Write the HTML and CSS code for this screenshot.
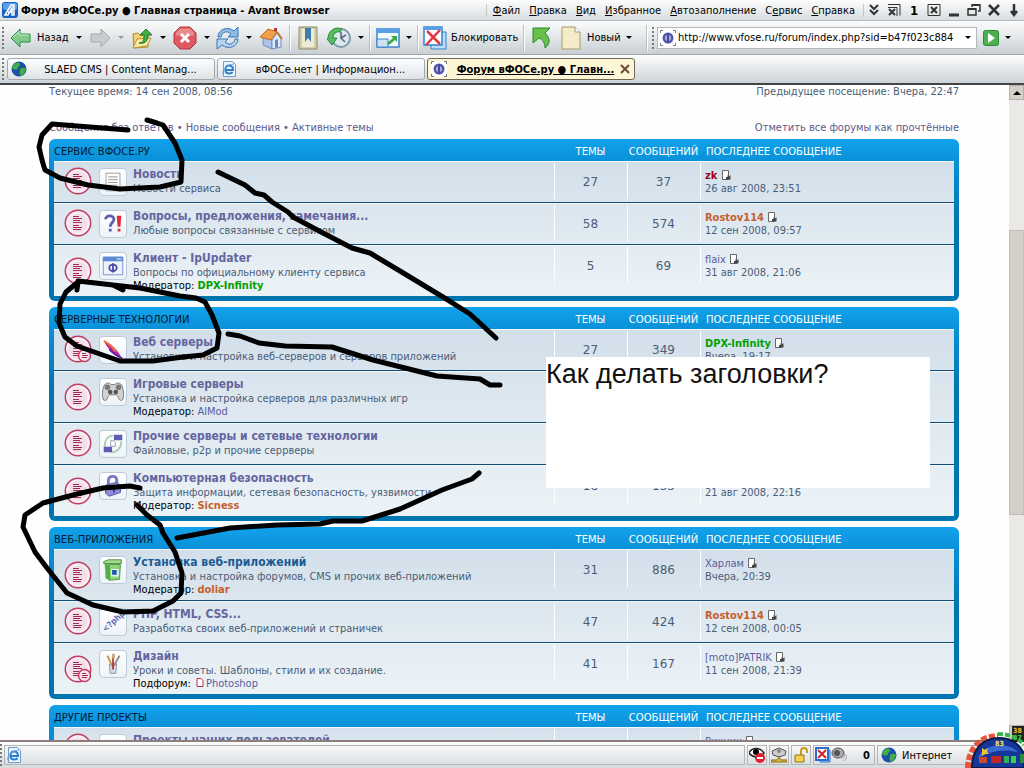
FILE: index.html
```html
<!DOCTYPE html>
<html lang="ru">
<head>
    <meta charset="UTF-8">
    <meta name="viewport" content="width=device-width, initial-scale=1.0">
    <title>Форум вФОСе.ру ● Главная страница</title>
    <link rel="stylesheet" href="styles.css">
</head>
<body>
    <!-- shared icons -->
    <svg class="defs" width="0" height="0">
        <symbol id="read" viewBox="0 0 28 28">
            <circle cx="14" cy="14" r="12.7" fill="#f1dfe9" stroke="#c43c61" stroke-width="1.5"/>
            <circle cx="14" cy="14" r="10.5" fill="none" stroke="#f8edf3" stroke-width="2"/>
            <path d="M9 7.500h6M9 9.500h9M9 11.500h7M9 16.500h6M9 18.500h9M9 20.500h8M9 13.500h9" stroke="#a52b55"/>
        </symbol>
        <symbol id="readsub" viewBox="0 0 28 28">
            <use href="#read"/>
            <circle cx="20.500" cy="20.500" r="6" fill="#f3e4ec" stroke="#c43c61" stroke-width="1.500"/>
            <path d="M18 18.500h4M18 20.500h6M18 22.500h5" stroke="#a52b55"/>
        </symbol>
        <symbol id="latest" viewBox="0 0 10 10">
            <path d="M1.500.500h6v9h-6z" fill="#fff" stroke="#666"/>
            <path d="M5 9.500h4.500V5L8 6.500 6.500 5v2H5z" fill="#444"/>
        </symbol>
        <symbol id="phi" viewBox="0 0 16 16">
            <path d="M0 0h16v16H0z" fill="#fff"/>
            <path d="M.500 3V.500H3M13 .500h2.500V3M15.500 13v2.500H13M3 15.500H.500V13" fill="none" stroke="#777"/>
            <circle cx="8" cy="8" r="5.500" fill="#5558a8"/>
            <ellipse cx="8" cy="8" rx="3" ry="3" fill="#aeb0dc"/>
            <path d="M8 3v10" stroke="#45489c" stroke-width="2"/>
        </symbol>
        <symbol id="globe" viewBox="0 0 16 16">
            <circle cx="8" cy="8" r="7.500" fill="#1c4fa8"/>
            <path d="M3 3c3-2 5-2 6 0s-2 2-2 4-4 2-6 0c0-1 1-3 2-4zM9 8c3-2 5-1 6 0-1 4-3 6-5 7-2-2-1-5-1-7z" fill="#3fae45"/>
        </symbol>
        <symbol id="ie" viewBox="0 0 16 16">
            <path d="M2.500.500h9l3 3v12h-12z" fill="#eef5fc" stroke="#6f9cc9"/>
            <path d="M11.500 11c-1 2-6 2.500-7-1-1-4 2-6 4.500-5.500 2 .400 3 2 3 4.500H5" fill="none" stroke="#2a80cc" stroke-width="2"/>
            <path d="M2 13C0 10 7 3 13 3" fill="none" stroke="#60a8e2"/>
        </symbol>
    </svg>

    <header class="titlebar">
        <svg class="app-icon" viewBox="0 0 16 16"><rect width="16" height="16" rx="3" fill="#1762c4"/><rect x="1" y="1" width="14" height="7" rx="2" fill="#5ba0ec"/><path d="M3 13L9 3h3v10h-2V6l-4 7zM6 10h5" fill="none" stroke="#fff" stroke-width="1.500"/></svg>
        <h1>Форум вФОСе.ру ● Главная страница - Avant Browser</h1>
        <nav class="menu">
            <a href="#"><u>Ф</u>айл</a>
            <a href="#"><u>П</u>равка</a>
            <a href="#"><u>В</u>ид</a>
            <a href="#"><u>И</u>збранное</a>
            <a href="#"><u>А</u>втозаполнение</a>
            <a href="#">С<u>е</u>рвис</a>
            <a href="#"><u>С</u>правка</a>
        </nav>
        <div class="winbuttons">
            <button aria-label="Свернуть панель"><svg viewBox="0 0 14 14"><path d="M3 2l4 4 4-4M3 7l4 4 4-4"/></svg></button>
            <button aria-label="Закрыть все"><svg viewBox="0 0 14 14"><path d="M1 1.500h12v11M1 4.500h9V13" stroke-width="1"/><path d="M2 6l6 6M8 6l-6 6"/></svg></button>
            <button class="num">1</button>
            <button aria-label="Закрыть вкладку"><svg viewBox="0 0 14 14"><path d="M1 1.500h12v11H1z" stroke-width="1"/><path d="M4 4l6 6M10 4l-6 6"/></svg></button>
            <button aria-label="Свернуть"><svg viewBox="0 0 14 14"><path d="M2 12h10" stroke-width="3"/></svg></button>
            <button aria-label="Восстановить"><svg viewBox="0 0 14 14"><path d="M5 4V2h8v6h-2" stroke-width="1.500"/><path d="M1 6h8v6H1z" stroke-width="1.500"/><path d="M1 6h8M5 2h8"/></svg></button>
            <button aria-label="Закрыть"><svg viewBox="0 0 14 14"><path d="M2 2l10 10M12 2L2 12" stroke-width="2.500"/></svg></button>
            <button aria-label="В трей"><svg viewBox="0 0 14 14"><path d="M7 1v10M4 8l3 4 3-4" stroke-width="2.500"/></svg></button>
        </div>
    </header>

    <div class="toolbar">
        <span class="grip"></span>
        <button class="tool tool-back"><svg viewBox="0 0 24 24"><path d="M2 12l9-9v5h10v8H11v5z" fill="#7fc98a" stroke="#2d8a43"/><path d="M4 11.500l6-6V9h10" fill="none" stroke="#c6ecc9"/></svg>Назад</button>
        <button class="caret" aria-label="История назад"></button>
        <button class="tool" aria-label="Вперёд"><svg viewBox="0 0 24 24"><path d="M22 12l-9-9v5H3v8h10v5z" fill="#c9cccf" stroke="#a5a9ad"/></svg></button>
        <button class="caret off" aria-label="История вперёд"></button>
        <button class="tool" aria-label="Вверх"><svg viewBox="0 0 24 24"><path d="M3 8l5-1 2 2h8v12l-14 1z" fill="#f0d070" stroke="#b08a30"/><path d="M3 22l4-9 14-1-4 8z" fill="#fbe9a0" stroke="#b89540"/><path d="M9 17c5 0 5-4 5-8h-4l6-6 6 6h-4c0 7-4 9-9 8z" fill="#43ad48" stroke="#1f7a2b"/></svg></button>
        <button class="caret" aria-label="Выбор папки"></button>
        <button class="tool tool-lg" aria-label="Стоп"><svg viewBox="0 0 24 24"><path d="M7 1h10l6 6v10l-6 6H7l-6-6V7z" fill="#df5a60" stroke="#b4333c"/><path d="M7 2.500h10l4 4v3H3v-3z" fill="#eb8a8c"/><path d="M8 8l8 8M16 8l-8 8" stroke="#fff" stroke-width="3"/></svg></button>
        <button class="caret" aria-label="Остановить все"></button>
        <button class="tool" aria-label="Обновить"><svg viewBox="0 0 24 24"><path d="M2 11C2 3 12 0 18 5l4-4v10H12l3-3C11 4 6 6 5 11z" fill="#8fbbe8" stroke="#3b74b5"/><path d="M22 13c0 8-10 11-16 6l-5 4V13h11l-3 3c4 4 9 2 10-3z" fill="#b3d2f0" stroke="#3b74b5"/></svg></button>
        <button class="caret" aria-label="Обновить все"></button>
        <button class="tool tool-lg" aria-label="Домой"><svg viewBox="0 0 24 24"><path d="M4 11l9 3v9l-9-4z" fill="#a9c4e8" stroke="#7390bb"/><path d="M13 14l5-7 4 6v8l-9 2z" fill="#dfeafa" stroke="#7390bb"/><path d="M15 2h3v4h-3z" fill="#b33"/><path d="M1 11l8-8 9 3-6 8z" fill="#f4a04a" stroke="#c06a20"/><path d="M18 6l5 7" stroke="#c97833" stroke-width="2"/><path d="M16 14l3-1v8l-3 1z" fill="#6c88b8"/></svg></button>
        <span class="sep"></span>
        <button class="tool" aria-label="Избранное"><svg viewBox="0 0 24 24"><path d="M3 1h18v22H3z" fill="#d3cfae" stroke="#8b8768"/><path d="M6 3h12v18H6z" fill="#eeecd9"/><path d="M9 2h6v14l-3-4-3 4z" fill="#3c7fa8"/></svg></button>
        <button class="tool tool-lg" aria-label="История"><svg viewBox="0 0 24 24"><circle cx="14" cy="12" r="9" fill="#dbe8f0" stroke="#8199a8" stroke-width="2"/><path d="M14 6v6l5-3M14 12l4 4" fill="none" stroke="#567" stroke-width="1.500"/><path d="M1 13C1 4 9 0 15 3l-2 3C9 5 6 8 6 12h4l-5 7-5-6z" fill="#5cbb62" stroke="#2c8a3c"/></svg></button>
        <button class="caret" aria-label="Журнал"></button>
        <span class="sep"></span>
        <button class="tool" aria-label="Окно"><svg viewBox="0 0 24 24"><path d="M1 3h22v18H1z" fill="#f4f9fe" stroke="#3b82cf" stroke-width="1.500"/><path d="M1 3h22v4H1z" fill="#5aa0e8"/><path d="M1 13h11v8H1z" fill="#cfe2f6" stroke="#3b82cf"/><path d="M11 17l6-5-2-2h6v6l-2-2-6 5z" fill="#3ba94a"/></svg></button>
        <button class="caret" aria-label="Размер окна"></button>
        <span class="sep"></span>
        <button class="tool tool-block"><svg viewBox="0 0 24 24"><path d="M8 6h15v17H8z" fill="#bcdcf8" stroke="#3183d2"/><path d="M1 1h18v18H1z" fill="#fff" stroke="#3183d2" stroke-width="1.500"/><path d="M1 1h18v3H1z" fill="#5aa0e8"/><path d="M4 5l13 13M17 4L3 19" stroke="#df3641" stroke-width="2.500"/></svg>Блокировать</button>
        <span class="sep"></span>
        <button class="tool" aria-label="Отправить"><svg viewBox="0 0 24 24"><path d="M3 2h17l-5 5c5 5 6 10 0 15 0-5-2-8-6-10l-6 5z" fill="#66c04b" stroke="#2d8a2d"/></svg></button>
        <button class="tool tool-new"><svg viewBox="0 0 24 24"><path d="M3 1h13l5 5v17H3z" fill="#f4ecc9" stroke="#a49a70"/><path d="M16 1v5h5" fill="#fff" stroke="#a49a70"/></svg>Новый</button>
        <button class="caret" aria-label="Новая вкладка"></button>
        <span class="sep address-sep"></span>
        <span class="grip"></span>
        <div class="address">
            <svg viewBox="0 0 16 16"><use href="#phi"/></svg>
            <input type="text" aria-label="Адрес" value="http://www.vfose.ru/forum/index.php?sid=b47f023c884">
            <button class="caret" aria-label="Список адресов"></button>
        </div>
        <button class="go" aria-label="Переход"><svg viewBox="0 0 16 16"><rect x=".500" y=".500" width="15" height="15" rx="2" fill="#4caf50" stroke="#2e8637"/><path d="M5 3l7 5-7 5z" fill="#fff"/></svg></button>
        <button class="caret" aria-label="Параметры перехода"></button>
    </div>

    <div class="tabs">
        <span class="grip"></span>
        <button class="tab"><svg viewBox="0 0 16 16"><use href="#globe"/></svg><span>SLAED CMS | Content Manag...</span></button>
        <button class="tab"><svg viewBox="0 0 16 16"><use href="#ie"/></svg><span>вФОСе.нет | Информацион...</span></button>
        <button class="tab active"><svg viewBox="0 0 16 16"><use href="#phi"/></svg><span>Форум вФОСе.ру ● Главн...</span><svg class="x" viewBox="0 0 10 10"><path d="M1 1l8 8M9 1L1 9" stroke="#6d4a3a" stroke-width="2"/></svg></button>
    </div>

    <div class="viewport">
        <main class="page">
            <div class="bar times">
                <span>Текущее время: 14 сен 2008, 08:56</span>
                <span>Предыдущее посещение: Вчера, 22:47</span>
            </div>
            <div class="bar links">
                <span><a href="#">Сообщения без ответов</a> • <a href="#">Новые сообщения</a> • <a href="#">Активные темы</a></span>
                <a href="#">Отметить все форумы как прочтённые</a>
            </div>

            <section class="forabg">
                <table>
                    <thead>
                        <tr><th class="category"><a href="#">Сервис вФОСе.ру</a></th><th class="num">Темы</th><th class="num">Сообщений</th><th class="last">Последнее сообщение</th></tr>
                    </thead>
                    <tbody>
                        <tr>
                            <td><div class="forum">
                                <svg class="status"><use href="#read"/></svg>
                                <svg class="icon" viewBox="0 0 28 28"><path d="M6.500 4.500h15v19h-15z" fill="#fff" stroke="#999"/><path d="M9 8.500h10M9 11.500h10M9 14.500h10M9 17.500h10M9 20.500h10" stroke="#888"/></svg>
                                <div><a class="title" href="#">Новости</a><p>Новости сервиса</p></div>
                            </div></td>
                            <td class="num">27</td><td class="num">37</td>
                            <td class="last"><a class="red" href="#">zk</a> <svg><use href="#latest"/></svg><br>26 авг 2008, 23:51</td>
                        </tr>
                        <tr>
                            <td><div class="forum">
                                <svg class="status"><use href="#read"/></svg>
                                <svg class="icon" viewBox="0 0 28 28"><path d="M6 9c0-5 9-5 9 0 0 3-4 4-4 8" fill="none" stroke="#5b5ea8" stroke-width="3"/><path d="M9.500 19h3v3h-3z" fill="#5b5ea8"/><path d="M18 5h5l-1 12h-3zM19 19h3v3h-3z" fill="#e02c3a"/></svg>
                                <div><a class="title" href="#">Вопросы, предложения, замечания...</a><p>Любые вопросы связанные с сервисом</p></div>
                            </div></td>
                            <td class="num">58</td><td class="num">574</td>
                            <td class="last"><a class="orange" href="#">Rostov114</a> <svg><use href="#latest"/></svg><br>12 сен 2008, 09:57</td>
                        </tr>
                        <tr>
                            <td><div class="forum">
                                <svg class="status"><use href="#read"/></svg>
                                <svg class="icon" viewBox="0 0 28 28"><path d="M3.500 4.500h21v19h-21z" fill="#eef3fb" stroke="#6d93cf"/><path d="M3 4h22v5H3z" fill="#5d8bd4"/><path d="M18 6.500h5" stroke="#fff"/><ellipse cx="14" cy="16" rx="4" ry="3.500" fill="none" stroke="#4a4da5" stroke-width="2"/><path d="M14 11v10" stroke="#4a4da5" stroke-width="2"/></svg>
                                <div><a class="title" href="#">Клиент - IpUpdater</a><p>Вопросы по официальному клиенту сервиса</p><p class="mod">Модератор: <a class="green" href="#">DPX-Infinity</a></p></div>
                            </div></td>
                            <td class="num">5</td><td class="num">69</td>
                            <td class="last"><a href="#">flaix</a> <svg><use href="#latest"/></svg><br>31 авг 2008, 21:06</td>
                        </tr>
                    </tbody>
                </table>
            </section>

            <section class="forabg">
                <table>
                    <thead>
                        <tr><th class="category"><a href="#">Серверные технологии</a></th><th class="num">Темы</th><th class="num">Сообщений</th><th class="last">Последнее сообщение</th></tr>
                    </thead>
                    <tbody>
                        <tr>
                            <td><div class="forum">
                                <svg class="status"><use href="#readsub"/></svg>
                                <svg class="icon" viewBox="0 0 28 28"><path d="M4 4c5 1 15 9 19 18-8-3-16-11-19-18z" fill="#c5208e"/><path d="M4 4c6 3 10 7 13 12" fill="none" stroke="#f08030" stroke-width="2"/><path d="M10 13c4 5 8 7 14 10" fill="none" stroke="#5a22a8" stroke-width="2"/></svg>
                                <div><a class="title" href="#">Веб серверы</a><p>Установка и настройка веб-серверов и серверов приложений</p></div>
                            </div></td>
                            <td class="num">27</td><td class="num">349</td>
                            <td class="last"><a class="green" href="#">DPX-Infinity</a> <svg><use href="#latest"/></svg><br>Вчера, 19:17</td>
                        </tr>
                        <tr>
                            <td><div class="forum">
                                <svg class="status"><use href="#read"/></svg>
                                <svg class="icon" viewBox="0 0 28 28"><path d="M4 8c2-5 7-4 8-2h4c1-2 6-3 8 2 2 6 2 15-1 15-3 1-3-6-6-6h-6c-3 0-3 7-6 6-3 0-3-9-1-15z" fill="#d2d2d2" stroke="#777"/><circle cx="8" cy="9" r="3" fill="#777"/><circle cx="20" cy="9" r="3" fill="#777"/><circle cx="11" cy="14" r="2.500" fill="#555"/><circle cx="17" cy="14" r="2.500" fill="#555"/></svg>
                                <div><a class="title" href="#">Игровые серверы</a><p>Установка и настройка серверов для различных игр</p><p class="mod">Модератор: <a href="#">AlMod</a></p></div>
                            </div></td>
                            <td class="num"></td><td class="num"></td><td class="last"></td>
                        </tr>
                        <tr>
                            <td><div class="forum">
                                <svg class="status"><use href="#read"/></svg>
                                <svg class="icon" viewBox="0 0 28 28"><path d="M5 17c0-7 3-12 9-12M23 11c0 7-4 12-11 12" fill="none" stroke="#a6cfae" stroke-width="2"/><path d="M15 4h9v6h-9zM4 17h9v6H4z" fill="#5a5db2"/><path d="M11.500 10.500h3l2 2v4h-5z" fill="#fff" stroke="#999"/></svg>
                                <div><a class="title" href="#">Прочие серверы и сетевые технологии</a><p>Файловые, p2p и прочие серрверы</p></div>
                            </div></td>
                            <td class="num"></td><td class="num"></td><td class="last"></td>
                        </tr>
                        <tr>
                            <td><div class="forum">
                                <svg class="status"><use href="#read"/></svg>
                                <svg class="icon" viewBox="0 0 28 28"><path d="M9 13V8c0-5 8-6 9-1v5" fill="none" stroke="#7a78c4" stroke-width="3"/><path d="M6 13l12-3 4 3v8l-12 4-4-3z" fill="#8f8cdc" stroke="#5a58a8"/><path d="M10 15l12-2" stroke="#c5c3f2"/><path d="M14 16h2v5h-2z" fill="#3b3990"/></svg>
                                <div><a class="title" href="#">Компьютерная безопасность</a><p>Защита информации, сетевая безопасность, уязвимости</p><p class="mod">Модератор: <a class="orange" href="#">Sicness</a></p></div>
                            </div></td>
                            <td class="num">18</td><td class="num">133</td>
                            <td class="last">&nbsp;<br>21 авг 2008, 22:16</td>
                        </tr>
                    </tbody>
                </table>
            </section>

            <section class="forabg">
                <table>
                    <thead>
                        <tr><th class="category"><a href="#">Веб-приложения</a></th><th class="num">Темы</th><th class="num">Сообщений</th><th class="last">Последнее сообщение</th></tr>
                    </thead>
                    <tbody>
                        <tr>
                            <td><div class="forum">
                                <svg class="status"><use href="#read"/></svg>
                                <svg class="icon" viewBox="0 0 28 28"><path d="M4 5l5-2h14v4H4z" fill="#a5dc8c" stroke="#47914a"/><path d="M5 7l5 1v17l-4-2z" fill="#58b347"/><path d="M10 8h12l-1 16-11 1z" fill="#8dd672" stroke="#47914a"/><path d="M12 13h8v8h-8z" fill="#e8f2ff"/><path d="M13 14h5v5h-5z" fill="#1b5aa8"/></svg>
                                <div><a class="title hover" href="#">Установка веб-приложений</a><p>Установка и настройка форумов, CMS и прочих веб-приложений</p><p class="mod">Модератор: <a class="orange" href="#">doliar</a></p></div>
                            </div></td>
                            <td class="num">31</td><td class="num">886</td>
                            <td class="last"><a href="#">Харлам</a> <svg><use href="#latest"/></svg><br>Вчера, 20:39</td>
                        </tr>
                        <tr>
                            <td><div class="forum">
                                <svg class="status"><use href="#read"/></svg>
                                <svg class="icon" viewBox="0 0 28 28"><text x="6" y="25" transform="rotate(-42 6 25)">&lt;?php</text></svg>
                                <div><a class="title" href="#">PHP, HTML, CSS...</a><p>Разработка своих веб-приложений и страничек</p></div>
                            </div></td>
                            <td class="num">47</td><td class="num">424</td>
                            <td class="last"><a class="orange" href="#">Rostov114</a> <svg><use href="#latest"/></svg><br>12 сен 2008, 00:05</td>
                        </tr>
                        <tr>
                            <td><div class="forum">
                                <svg class="status"><use href="#readsub"/></svg>
                                <svg class="icon" viewBox="0 0 28 28"><path d="M10 14h8l-1 10h-6z" fill="#cfdde4" stroke="#8898a0"/><path d="M13 16L8 5" stroke="#c69a4a" stroke-width="2"/><path d="M15 16l6-11" stroke="#888" stroke-width="2"/><path d="M14 20V6" stroke="#c03a3a" stroke-width="2"/><path d="M13 3h3v5h-3z" fill="#c9a580"/></svg>
                                <div><a class="title" href="#">Дизайн</a><p>Уроки и советы. Шаблоны, стили и их создание.</p><p class="mod">Подфорум: <svg class="sub" viewBox="0 0 8 9"><path d="M1 .500h4l2 2v6H1z" fill="#fff" stroke="#c2294c"/></svg><a href="#">Photoshop</a></p></div>
                            </div></td>
                            <td class="num">41</td><td class="num">167</td>
                            <td class="last"><a href="#">[moto]PATRIK</a> <svg><use href="#latest"/></svg><br>11 сен 2008, 21:39</td>
                        </tr>
                    </tbody>
                </table>
            </section>

            <section class="forabg">
                <table>
                    <thead>
                        <tr><th class="category"><a href="#">Другие проекты</a></th><th class="num">Темы</th><th class="num">Сообщений</th><th class="last">Последнее сообщение</th></tr>
                    </thead>
                    <tbody>
                        <tr>
                            <td><div class="forum">
                                <svg class="status"><use href="#read"/></svg>
                                <svg class="icon" viewBox="0 0 28 28"><circle cx="10" cy="9" r="4" fill="#c8a88c"/><circle cx="19" cy="9" r="4" fill="#c8a88c"/></svg>
                                <div><a class="title" href="#">Проекты наших пользователей</a></div>
                            </div></td>
                            <td class="num"></td><td class="num"></td>
                            <td class="last"><a href="#">Рикник</a> <svg><use href="#latest"/></svg></td>
                        </tr>
                    </tbody>
                </table>
            </section>
        </main>
        <div class="scrollbar">
            <button class="up" aria-label="Вверх"></button>
            <div class="thumb"></div>
            <button class="down" aria-label="Вниз"></button>
        </div>
    </div>

    <footer class="statusbar">
        <span class="grip"></span>
        <div class="cell message"><svg viewBox="0 0 16 16"><use href="#ie"/></svg></div>
        <div class="cell"><svg viewBox="0 0 16 16"><path d="M0 6c3-6 11-6 15 0-4 5-11 5-15 0z" fill="#fff" stroke="#222" stroke-width="1.500"/><circle cx="7" cy="5" r="3"/><circle cx="11" cy="11" r="5" fill="#e0202c"/><path d="M8 11h6" stroke="#fff" stroke-width="2"/></svg></div>
        <div class="cell"><svg viewBox="0 0 16 16"><path d="M1 4l7-3 7 3-1 4-6 2-6-2z" fill="#ccc" stroke="#555"/><circle cx="8" cy="4" r="2" fill="#888"/><path d="M0 13h6l2-3 2 3h6v2H0z" fill="#e2b93b" stroke="#866a18"/></svg></div>
        <div class="cell"><svg viewBox="0 0 16 16"><path d="M8 8V4c0-4 6-4 6 0v2" fill="none" stroke="#c99a20" stroke-width="2"/><path d="M2 8h9v7H2z" fill="#f5d04a" stroke="#94701a"/></svg></div>
        <div class="cell counter">
            <svg viewBox="0 0 16 16"><path d="M5 3h10v12H5z" fill="#bcdcf8" stroke="#2a6fd0"/><path d="M1 1h12v12H1z" fill="#fff" stroke="#2a6fd0" stroke-width="2"/><path d="M3 3l8 8M11 3l-8 8" stroke="#d61e2b" stroke-width="2"/></svg>
            <svg viewBox="0 0 16 16"><ellipse cx="7" cy="6" rx="6" ry="5" fill="#aaa" stroke="#555"/><circle cx="6" cy="6" r="3" fill="#555"/><path d="M11 12c2-1 3-3 3-5M13 14c2-2 3-4 3-6" fill="none" stroke="#99a"/></svg>
            <b>0</b>
        </div>
        <div class="cell zone"><svg viewBox="0 0 16 16"><use href="#globe"/></svg>Интернет</div>
    </footer>

    <!-- desktop gauge in the corner -->
    <svg class="gauge" viewBox="0 0 60 42">
        <path d="M48 0h12v16H48z" fill="#222"/>
        <text x="49" y="7" fill="#f0c020">38</text>
        <text x="49" y="14" fill="#40d040">87</text>
        <path d="M4 42C4 24 16 10 34 10" fill="none" stroke="#e8543a" stroke-width="6" stroke-dasharray="6 2"/>
        <path d="M34 8c11 0 21 4 26 11" fill="none" stroke="#39b54a" stroke-width="4" stroke-dasharray="5 2"/>
        <path d="M8 42c0-18 10-30 27-30 14 0 22 8 25 16v14z" fill="#16379a" stroke="#0a1a4d" stroke-width="2"/>
        <path d="M14 32c4-13 28-18 40-6-14-4-30 0-40 6z" fill="#3d6ad0"/>
        <path d="M15 31h8v6h-8z" fill="#c84a30"/><path d="M27 30h10v7H27z" fill="#c02828"/><path d="M40 30h5v7h-5z" fill="#30b050"/><path d="M47 30h5v7h-5z" fill="#36d04c"/><path d="M56 28h4v9h-4z" fill="#2b8f3a"/>
        <path d="M18 22l3 2 3-2-1 4 2 2h-4l-3 2z" fill="#f0c43a"/>
        <text x="31" y="20" fill="#ffe860">83</text>
    </svg>

    <!-- hand-drawn notes -->
    <div class="note">Как делать заголовки?</div>
    <svg class="strokes" viewBox="0 0 1024 768">
        <polyline points="128,130 90,127 52,124 42,135 39,147 42,160 45,170 60,178 88,185 120,189 160,187 181,182 182,160 175,143 163,125 157,123 147,120"/>
        <polyline points="218,172 245,185 255,193 264,195 272,202 288,212 293,217 323,233 352,248 370,253 400,271 443,297 470,314 496,338"/>
        <polyline points="77,290 78,282 66,292 60,304 59,323 65,337 77,346 97,353 120,361 153,361 183,357 203,355 217,348 219,333 212,315 205,302 196,298 180,296 140,288 113,285 123,290 113,285 78,281"/>
        <polyline points="228,334 240,336 259,343 285,346 332,347 373,360 437,376 480,379 490,385 500,385"/>
        <polyline points="140,488 130,486 103,488 77,494 43,503 25,515 23,527 35,552 47,568 67,593 93,605 123,612 153,611 173,601 181,593 182,573 175,552 163,533 160,525 147,515 137,505"/>
        <polyline points="177,538 230,528 277,525 320,524 333,521 362,521 400,509 442,490 472,479 479,473"/>
    </svg>
</body>
</html>
```
FILE: styles.css
```css
* {
    box-sizing: border-box;
}

body {
    display: flex;
    flex-direction: column;
    height: 100vh;
    margin: 0;
    overflow: hidden;
    background: #fefefe;
    color: #000;
    font-family: "DejaVu Sans Condensed", "DejaVu Sans", sans-serif;
    font-size: 11px;
    line-height: 13px;
}

a {
    color: inherit;
    text-decoration: none;
}

button {
    padding: 0;
    border: 0;
    background: none;
    color: inherit;
    font: inherit;
}

svg {
    flex: none;
}

.defs {
    position: absolute;
}

/* Window chrome */

.titlebar,
.toolbar,
.tabs,
.statusbar {
    display: flex;
    flex: none;
    align-items: center;
}

.titlebar {
    height: 21px;
    padding-left: 2px;
    background: linear-gradient(#fcfdfd, #d9dde0);
    border-bottom: 1px solid #b5babd;
}

.app-icon {
    width: 16px;
    height: 16px;
    margin-right: 3px;
}

.titlebar h1 {
    margin: 0;
    font-size: 11px;
    white-space: nowrap;
}

.menu {
    display: flex;
    gap: 9px;
    margin-left: auto;
    padding: 0 8px 0 6px;
    border-left: 1px solid #c3c7ca;
    border-right: 1px solid #c3c7ca;
}

.winbuttons {
    display: flex;
}

.winbuttons button {
    display: flex;
    align-items: center;
    justify-content: center;
    width: 20px;
    height: 20px;
    font-size: 13px;
    font-weight: bold;
}

.winbuttons svg {
    width: 14px;
    height: 14px;
    fill: none;
    stroke: #333;
    stroke-width: 2;
}

.toolbar {
    height: 34px;
    background: linear-gradient(#fcfdfd, #c9cfd3);
    border-bottom: 1px solid #a3a8ab;
}

.grip {
    flex: none;
    width: 2px;
    height: 22px;
    margin: 0 3px 0 2px;
    background: repeating-linear-gradient(#777 0 2px, transparent 2px 4px);
}

.tool {
    display: flex;
    align-items: center;
    justify-content: center;
    width: 30px;
    height: 28px;
}

.tool svg {
    width: 24px;
    height: 24px;
}

.tool-lg {
    width: 32px;
}

.tool-back,
.tool-block,
.tool-new {
    justify-content: flex-start;
    gap: 4px;
    padding-left: 2px;
}

.tool-back {
    width: 66px;
}

.tool-block {
    width: 100px;
}

.tool-new {
    width: 66px;
}

.caret {
    flex: none;
    width: 12px;
    height: 20px;
}

.caret::before {
    content: "";
    display: block;
    width: 0;
    margin: auto;
    border: 3px solid transparent;
    border-top-color: #000;
    border-bottom: 0;
}

.caret.off::before {
    border-top-color: #999;
}

.sep {
    flex: none;
    width: 2px;
    height: 26px;
    margin: 0 2px;
    background: #b9bfc3;
    border-right: 1px solid #fff;
}

.address-sep {
    margin-left: 11px;
}

.address {
    display: flex;
    flex: 1;
    align-items: center;
    height: 22px;
    padding: 0 2px;
    background: #fff;
    border: 1px solid #b4b9bd;
}

.address svg,
.go svg {
    display: block;
    width: 16px;
    height: 16px;
}

.address input {
    flex: 1;
    min-width: 0;
    padding: 0 2px;
    border: 0;
    background: none;
    font: inherit;
}

.go {
    margin: 0 3px 0 6px;
}

.toolbar > .caret:last-child {
    margin-right: 10px;
}

.tabs {
    height: 30px;
    gap: 2px;
    background: linear-gradient(#fcfdfd, #cdd3d7);
    border-bottom: 2px solid #444;
}

.tabs .grip {
    margin-right: 1px;
}

.tab {
    display: flex;
    align-items: center;
    width: 208px;
    height: 22px;
    padding: 0 4px 0 3px;
    background: linear-gradient(#fdfdfe, #dfe3e6);
    border: 1px solid #a4a9ac;
    border-radius: 3px;
}

.tab svg {
    width: 16px;
    height: 16px;
}

.tab span {
    flex: 1;
    padding-left: 4px;
    text-align: center;
    white-space: nowrap;
}

.tab.active {
    background: #fdf6d6;
    border-color: #6f6750;
    font-weight: bold;
    text-decoration: underline;
}

.tab .x {
    width: 10px;
    height: 10px;
}

/* Forum page */

.viewport {
    display: flex;
    flex: 1;
    min-height: 0;
}

.page {
    flex: 1;
    overflow: hidden;
    padding: 0 50px 0 49px;
    color: #4c5d77;
}

.bar {
    display: flex;
    justify-content: space-between;
}

.links {
    margin: 23px 0 5px;
    color: #5a5a8c;
}

.forabg {
    margin-bottom: 6px;
    padding: 0 5px 5px;
    background: #0076b1 linear-gradient(#12a3eb, #0a90d8 22px, #0076b1 80px) no-repeat;
    border-radius: 6px;
}

.forabg table {
    width: 100%;
    border-spacing: 0;
    table-layout: fixed;
}

.forabg th {
    height: 22px;
    padding: 2px 0 0;
    color: #fff;
    font-family: "DejaVu Sans", sans-serif;
    font-size: 10px;
    font-weight: normal;
    text-align: center;
    text-transform: uppercase;
}

.forabg th.category {
    color: #001833;
    text-align: left;
}

.forabg th.num {
    width: 73px;
}

.forabg th.last {
    width: 254px;
    padding-left: 6px;
    text-align: left;
}

.forabg tbody {
    background: linear-gradient(#d2dfea, #ecf3f7);
}

.forabg td {
    height: 42px;
    padding: 0;
    border-top: 1px solid #f4f8fb;
    border-bottom: 1px solid #0f4d78;
    vertical-align: top;
}

.forabg tr:last-child td {
    border-bottom: 0;
}

.forabg td.num,
.forabg td.last {
    background: linear-gradient(#fff, #fff) 0 1px / 1px 36px no-repeat;
}

.forabg td.num {
    font-family: "DejaVu Sans", sans-serif;
    font-size: 12px;
    line-height: 40px;
    text-align: center;
}

.forabg td.last {
    padding: 7px 0 0 5px;
}

.last a {
    color: #5c5c9c;
}

.last svg {
    width: 10px;
    height: 10px;
    margin-bottom: -1px;
}

.forum {
    display: flex;
    padding: 4px 0 4px 10px;
}

.status {
    align-self: center;
    width: 28px;
    height: 28px;
    margin-right: 7px;
}

.icon {
    width: 28px;
    height: 28px;
    margin: 2px 6px 0 0;
    background: linear-gradient(#fff, #eef3f8);
    border: 1px solid #bccbd8;
    border-radius: 4px;
}

.icon text {
    fill: #6668b0;
    font-size: 9px;
    font-weight: bold;
}

.forum p {
    margin: 0;
}

.forum .title {
    display: block;
    color: #65659f;
    font-size: 12px;
    font-weight: bold;
    line-height: 16px;
}

.forum .title.hover {
    color: #1b5b94;
}

.mod {
    color: #000;
}

.mod a {
    color: #5c5c9c;
}

.mod .sub {
    width: 8px;
    height: 9px;
    margin: 0 2px;
}

a.red,
a.orange,
a.green {
    font-weight: bold;
}

a.red {
    color: #a00014;
}

a.orange {
    color: #c75f2c;
}

a.green {
    color: #00a000;
}

/* Scrollbar */

.scrollbar {
    display: flex;
    flex: none;
    flex-direction: column;
    width: 15px;
    background: #ebe9e5;
}

.scrollbar button {
    height: 15px;
    background: #d4d0c8;
    border: 1px solid #b5b1a9;
}

.scrollbar button::before {
    content: "";
    display: block;
    width: 0;
    margin: auto;
    border: 4px solid transparent;
}

.scrollbar .up::before {
    border-top: 0;
    border-bottom-color: #000;
}

.scrollbar .down::before {
    border-bottom: 0;
    border-top-color: #000;
}

.scrollbar .thumb {
    flex: 284;
    background: #d4d0c8;
    border: 1px solid #c2beb6;
}

.scrollbar .up {
    margin-bottom: 130px;
}

.scrollbar .down {
    margin-top: 210px;
}

/* Status bar */

.statusbar {
    height: 28px;
    gap: 2px;
    padding-right: 38px;
    background: linear-gradient(#fcfdfd, #d6dadd);
    border-top: 2px solid #8c7f7c;
}

.statusbar .grip {
    margin: 0;
}

.cell {
    display: flex;
    align-items: center;
    height: 20px;
    padding: 0 1px;
    border: 1px solid #b3b5b6;
}

.cell svg {
    width: 16px;
    height: 16px;
}

.message {
    flex: 1;
}

.counter {
    width: 62px;
}

.counter b {
    margin: 0 3px 0 auto;
}

.zone {
    width: 109px;
    gap: 5px;
    padding-left: 3px;
    border-right: 0;
}

.gauge {
    position: absolute;
    right: 0;
    bottom: 0;
    width: 60px;
    height: 42px;
}

.gauge text {
    font-size: 7px;
    font-weight: bold;
}

/* Notes drawn over the page */

.note {
    position: absolute;
    top: 357px;
    left: 546px;
    width: 384px;
    height: 131px;
    background: #fff;
    color: #111;
    font-family: "Liberation Sans", sans-serif;
    font-size: 27px;
    line-height: 34px;
}

.strokes {
    position: absolute;
    top: 0;
    left: 0;
    width: 1024px;
    height: 768px;
    fill: none;
    stroke: #000;
    stroke-width: 5;
    stroke-linecap: round;
    stroke-linejoin: round;
    pointer-events: none;
}
```
